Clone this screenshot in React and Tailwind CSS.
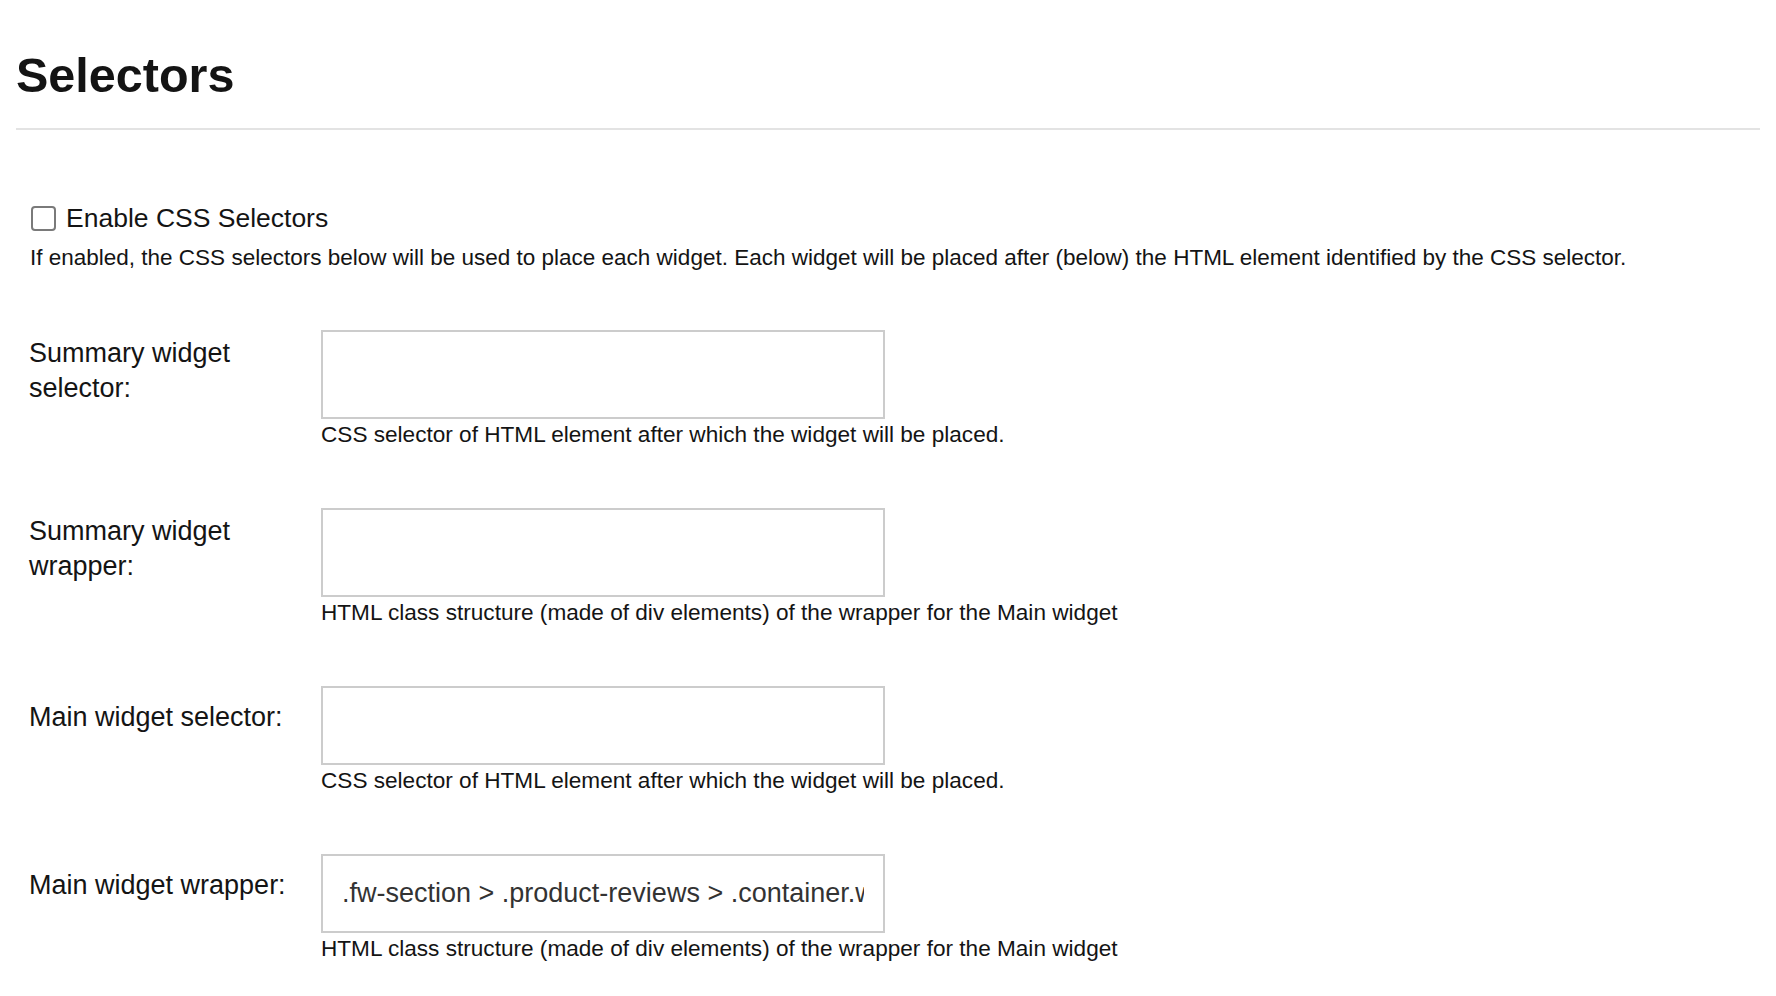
import React from 'react';

const rows = [
  {
    id: 'summary-selector',
    label: 'Summary widget selector:',
    help: 'CSS selector of HTML element after which the widget will be placed.',
    height: 'h-[89px]',
    pad: 'pt-[6px]',
    value: '',
  },
  {
    id: 'summary-wrapper',
    label: 'Summary widget wrapper:',
    help: 'HTML class structure (made of div elements) of the wrapper for the Main widget',
    height: 'h-[89px]',
    pad: 'pt-[6px]',
    value: '',
  },
  {
    id: 'main-selector',
    label: 'Main widget selector:',
    help: 'CSS selector of HTML element after which the widget will be placed.',
    height: 'h-[79px]',
    pad: 'pt-[14px]',
    value: '',
  },
  {
    id: 'main-wrapper',
    label: 'Main widget wrapper:',
    help: 'HTML class structure (made of div elements) of the wrapper for the Main widget',
    height: 'h-[79px]',
    pad: 'pt-[14px]',
    value: '.fw-section > .product-reviews > .container.wrapper',
  },
];

const App = () => {
  return (
    <div className="min-h-screen bg-white px-4 pt-[47px] text-[#141414] font-['Liberation_Sans',Arial,sans-serif]">
      <h1 className="text-[48.5px] leading-[56px] font-bold">Selectors</h1>
      <div className="mt-[25px] h-[2px] bg-[#e3e3e3]" />

      <div className="pl-[15px]">
        <label className="mt-[71px] flex items-center gap-[10px] text-[26.5px] leading-[35px]">
          <input
            type="checkbox"
            className="appearance-none w-[25px] h-[25px] border-2 border-[#7a7a7a] rounded-[4px] bg-white"
          />
          <span>Enable CSS Selectors</span>
        </label>
        <p className="mt-[7px] -ml-px text-[22.5px] leading-[30px]">
          If enabled, the CSS selectors below will be used to place each widget. Each widget will be placed after (below) the HTML element identified by the CSS selector.
        </p>

        <div className="mt-[57px] flex flex-col gap-[57px]">
          {rows.map((row) => (
            <div key={row.id} className="flex">
              <div className={`w-[290px] -ml-[2px] pr-[18px] text-[27px] leading-[35px] ${row.pad}`}>
                {row.label}
              </div>
              <div className="ml-[2px] flex flex-col">
                <input
                  type="text"
                  defaultValue={row.value}
                  className={`w-[564px] ${row.height} border-2 border-[#cccccc] px-[19px] text-[27px] text-[#333] outline-none`}
                />
                <div className="text-[22.6px] leading-[32px]">{row.help}</div>
              </div>
            </div>
          ))}
        </div>
      </div>
    </div>
  );
};

export default App;
